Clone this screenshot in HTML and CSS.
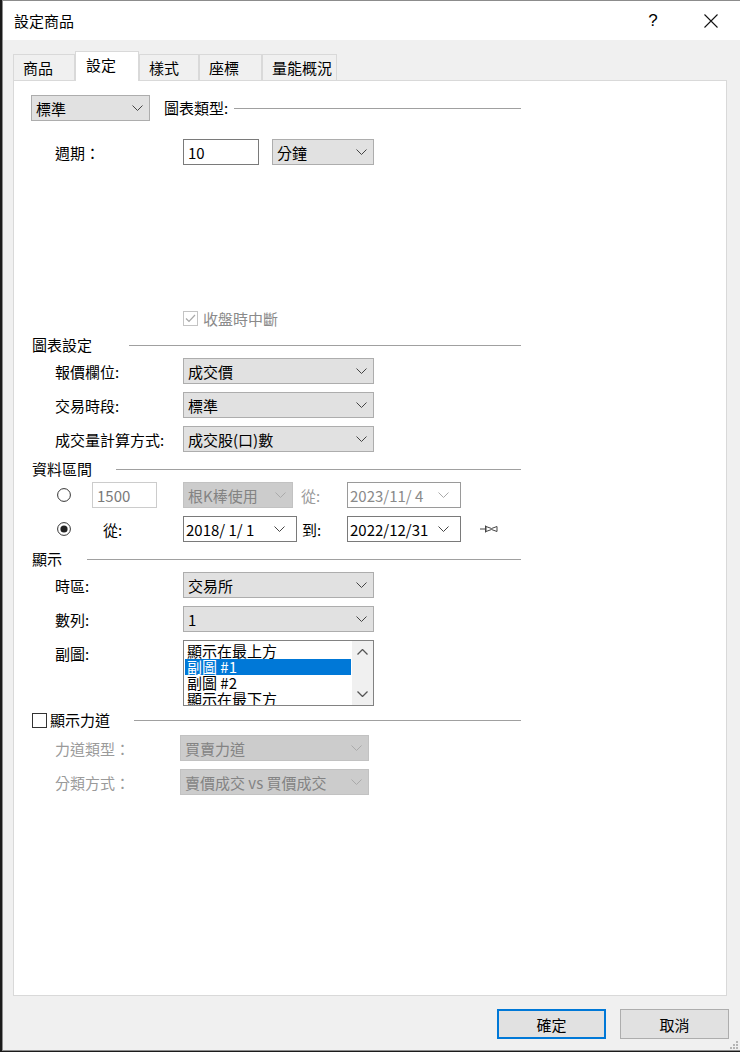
FILE: index.html
```html
<!DOCTYPE html>
<html lang="zh-Hant">
<head>
  <meta charset="UTF-8">
  <title>設定商品</title>
  <link rel="stylesheet" href="styles.css">
</head>
<body>
  <div class="window">
    <div class="titlebar">
      <span class="title">設定商品</span>
      <span class="help">?</span>
      <svg class="close" width="14" height="14" viewBox="0 0 14 14"><path d="M0.5 0.5L13.5 13.5M13.5 0.5L0.5 13.5" stroke="#111" stroke-width="1.1" fill="none"/></svg>
    </div>

    <div class="tabs">
      <div class="tab w62">商品</div>
      <div class="tab active">設定</div>
      <div class="tab w60">樣式</div>
      <div class="tab w63">座標</div>
      <div class="tab w75">量能概況</div>
    </div>

    <div class="panel">
      <!-- 圖表類型 -->
      <div class="row first">
        <div class="combo w119"><span>標準</span><svg class="chev" width="11" height="6" viewBox="0 0 11 6"><path d="M0.5 0.5L5.5 5.5L10.5 0.5"/></svg></div>
        <div class="sect-inline">
          <span class="sect-title">圖表類型:</span>
          <span class="sect-line"></span>
        </div>
      </div>

      <div class="row period">
        <span class="lbl">週期：</span>
        <div class="edit w76">10</div>
        <div class="combo w102 ml13"><span>分鐘</span><svg class="chev" width="11" height="6" viewBox="0 0 11 6"><path d="M0.5 0.5L5.5 5.5L10.5 0.5"/></svg></div>
      </div>

      <div class="check-row">
        <svg class="box" width="15" height="15" viewBox="0 0 15 15"><rect x="0.5" y="0.5" width="14" height="14" fill="#fff" stroke="#c4c4c4"/><path d="M3 7.5L6 10.5L12 4" stroke="#a8a8a8" stroke-width="1.2" fill="none"/></svg>
        <span class="dim">收盤時中斷</span>
      </div>

      <!-- 圖表設定 -->
      <div class="sect after-check">
        <span class="sect-title t91">圖表設定</span>
        <span class="sect-line"></span>
      </div>
      <div class="row">
        <span class="lbl">報價欄位:</span>
        <div class="combo w191"><span>成交價</span><svg class="chev" width="11" height="6" viewBox="0 0 11 6"><path d="M0.5 0.5L5.5 5.5L10.5 0.5"/></svg></div>
      </div>
      <div class="row">
        <span class="lbl">交易時段:</span>
        <div class="combo w191"><span>標準</span><svg class="chev" width="11" height="6" viewBox="0 0 11 6"><path d="M0.5 0.5L5.5 5.5L10.5 0.5"/></svg></div>
      </div>
      <div class="row">
        <span class="lbl">成交量計算方式:</span>
        <div class="combo w191"><span>成交股(口)數</span><svg class="chev" width="11" height="6" viewBox="0 0 11 6"><path d="M0.5 0.5L5.5 5.5L10.5 0.5"/></svg></div>
      </div>

      <!-- 資料區間 -->
      <div class="sect">
        <span class="sect-title t78">資料區間</span>
        <span class="sect-line"></span>
      </div>
      <div class="row radio-row">
        <svg class="radio" width="14" height="14" viewBox="0 0 14 14"><circle cx="7" cy="7" r="6.4" fill="#fff" stroke="#333"/></svg>
        <div class="edit disabled w65 ml21">1500</div>
        <div class="combo disabled w110 ml26"><span>根K棒使用</span><svg class="chev" width="11" height="6" viewBox="0 0 11 6"><path d="M0.5 0.5L5.5 5.5L10.5 0.5"/></svg></div>
        <span class="cell w54 dim-light">從:</span>
        <div class="date disabled"><span>2023/11/ 4</span><svg class="chev" width="11" height="6" viewBox="0 0 11 6"><path d="M0.5 0.5L5.5 5.5L10.5 0.5"/></svg></div>
      </div>
      <div class="row radio-row">
        <svg class="radio" width="14" height="14" viewBox="0 0 14 14"><circle cx="7" cy="7" r="6.4" fill="#fff" stroke="#333"/><circle cx="7" cy="7" r="3.6" fill="#222"/></svg>
        <span class="cell w112">從:</span>
        <div class="date"><span>2018/ 1/ 1</span><svg class="chev" width="11" height="6" viewBox="0 0 11 6"><path d="M0.5 0.5L5.5 5.5L10.5 0.5"/></svg></div>
        <span class="cell w50">到:</span>
        <div class="date"><span>2022/12/31</span><svg class="chev" width="11" height="6" viewBox="0 0 11 6"><path d="M0.5 0.5L5.5 5.5L10.5 0.5"/></svg></div>
        <svg class="pin" width="18" height="12" viewBox="0 0 18 12"><path d="M0 6H5M5.5 2.5V9.5M6 3.5L11.5 5.5L17 3.5V8.5L11.5 6.5L6 8.5Z" stroke="#444" stroke-width="1" fill="none"/></svg>
      </div>

      <!-- 顯示 -->
      <div class="sect">
        <span class="sect-title t49">顯示</span>
        <span class="sect-line"></span>
      </div>
      <div class="row">
        <span class="lbl">時區:</span>
        <div class="combo w191"><span>交易所</span><svg class="chev" width="11" height="6" viewBox="0 0 11 6"><path d="M0.5 0.5L5.5 5.5L10.5 0.5"/></svg></div>
      </div>
      <div class="row">
        <span class="lbl">數列:</span>
        <div class="combo w191"><span>1</span><svg class="chev" width="11" height="6" viewBox="0 0 11 6"><path d="M0.5 0.5L5.5 5.5L10.5 0.5"/></svg></div>
      </div>
      <div class="row list-row">
        <span class="lbl">副圖:</span>
        <div class="listbox">
          <div class="items">
            <div class="item">顯示在最上方</div>
            <div class="item sel">副圖 #1</div>
            <div class="item">副圖 #2</div>
            <div class="item">顯示在最下方</div>
          </div>
          <div class="vscroll">
            <svg width="11" height="6" viewBox="0 0 11 6"><path d="M0.5 5.5L5.5 0.5L10.5 5.5" stroke="#555" stroke-width="1.3" fill="none"/></svg>
            <svg width="11" height="6" viewBox="0 0 11 6"><path d="M0.5 0.5L5.5 5.5L10.5 0.5" stroke="#555" stroke-width="1.3" fill="none"/></svg>
          </div>
        </div>
      </div>

      <!-- 顯示力道 -->
      <div class="sect after-list">
        <svg class="box" width="15" height="15" viewBox="0 0 15 15"><rect x="0.5" y="0.5" width="14" height="14" fill="#fff" stroke="#333"/></svg>
        <span class="sect-title t78 tight">顯示力道</span>
        <span class="sect-line"></span>
      </div>
      <div class="row after-force">
        <span class="lbl narrow dim-light">力道類型：</span>
        <div class="combo disabled w189"><span>買賣力道</span><svg class="chev" width="11" height="6" viewBox="0 0 11 6"><path d="M0.5 0.5L5.5 5.5L10.5 0.5"/></svg></div>
      </div>
      <div class="row">
        <span class="lbl narrow dim-light">分類方式：</span>
        <div class="combo disabled w189"><span>賣價成交 vs 買價成交</span><svg class="chev" width="11" height="6" viewBox="0 0 11 6"><path d="M0.5 0.5L5.5 5.5L10.5 0.5"/></svg></div>
      </div>
    </div>

    <div class="buttons">
      <button class="btn default">確定</button>
      <button class="btn">取消</button>
    </div>

    <svg class="grip" width="9" height="9" viewBox="0 0 9 9"><g fill="#b5b5b5"><rect x="7" y="1" width="2" height="2"/><rect x="4" y="4" width="2" height="2"/><rect x="7" y="4" width="2" height="2"/><rect x="1" y="7" width="2" height="2"/><rect x="4" y="7" width="2" height="2"/><rect x="7" y="7" width="2" height="2"/></g></svg>
  </div>
</body>
</html>
```

FILE: styles.css
```css
* {
  box-sizing: border-box;
}

body {
  margin: 0;
  background: #1b1b1b;
  font-family: "Noto Sans CJK TC", "Liberation Sans", sans-serif;
  font-size: 15px;
  color: #000;
  overflow: hidden;
}

.window {
  position: relative;
  margin-left: 2px;
  width: 738px;
  height: 1051px;
  border: 1px solid #8c8c8c;
  border-right: none;
  background: #f0f0f0;
  display: flex;
  flex-direction: column;
}

/* title bar */
.titlebar {
  height: 39px;
  flex: none;
  background: #fff;
  display: flex;
  align-items: center;
  padding-left: 11px;
}

.title {
  line-height: 1;
}

.help {
  margin-left: auto;
  width: 20px;
  text-align: center;
  font-family: "Liberation Sans", sans-serif;
  font-size: 17px;
  line-height: 1;
}

.close {
  margin-left: 41px;
  margin-right: 22px;
}

/* tabs */
.tabs {
  display: flex;
  align-items: flex-end;
  height: 29px;
  margin-top: 11px;
  padding-left: 10px;
  flex: none;
}

.tab {
  height: 26px;
  border: 1px solid #d9d9d9;
  border-bottom: none;
  background: #f0f0f0;
  padding-left: 9px;
  line-height: 26px;
  white-space: nowrap;
}

.tab.w62 { width: 62px; }
.tab.w60 { width: 60px; }
.tab.w63 { width: 63px; }
.tab.w75 { width: 75px; }

.tab.active {
  width: 64px;
  height: 30px;
  margin-bottom: -1px;
  background: #fff;
  position: relative;
  z-index: 1;
  line-height: 26px;
  padding-left: 10px;
}

/* panel */
.panel {
  margin-left: 10px;
  width: 714px;
  height: 916px;
  flex: none;
  border: 1px solid #d9d9d9;
  background: #fff;
  padding: 14px 0 0 17px;
}

.row {
  display: flex;
  align-items: center;
  height: 26px;
  margin-top: 8px;
  white-space: nowrap;
}

.row.first { margin-top: 0; }
.row.period { margin-top: 18px; }
.sect + .row { margin-top: 4px; }
.sect + .row.after-force { margin-top: 6px; }

.lbl {
  width: 152px;
  padding-left: 24px;
  flex: none;
}

.lbl.narrow { width: 149px; }

.dim { color: #8a8a8a; }
.dim-light { color: #9a9a9a; }

/* controls */
.combo,
.date,
.edit {
  height: 26px;
  display: flex;
  align-items: center;
  justify-content: space-between;
  flex: none;
  line-height: 1;
}

.combo {
  background: #e1e1e1;
  border: 1px solid #adadad;
  padding: 0 6px 0 4px;
}

.combo.disabled {
  background: #cccccc;
  border-color: #c2c2c2;
  color: #838383;
}

.chev path {
  stroke: #444;
  stroke-width: 1;
  fill: none;
}

.disabled .chev path {
  stroke: #aaa;
}

.edit {
  background: #fff;
  border: 1px solid #7a7a7a;
  padding: 0 4px;
}

.edit.disabled {
  border-color: #cccccc;
  color: #7a7a7a;
}

.date {
  width: 114px;
  background: #fff;
  border: 1px solid #7a7a7a;
  padding: 0 11px 0 2px;
}

.date.disabled {
  border-color: #9a9a9a;
  color: #8a8a8a;
}

.w119 { width: 119px; }
.w76 { width: 76px; }
.w102 { width: 102px; }
.w191 { width: 191px; }
.w189 { width: 189px; }
.w65 { width: 65px; }
.w110 { width: 110px; }

.ml13 { margin-left: 13px; }
.ml21 { margin-left: 21px; }
.ml26 { margin-left: 26px; }

.cell { flex: none; }
.cell.w54 { width: 54px; padding-left: 8px; }
.cell.w112 { width: 112px; padding-left: 32px; }
.cell.w50 { width: 50px; padding-left: 5px; }

.radio-row { padding-left: 26px; }

.pin { margin-left: 19px; }

/* section headings */
.sect,
.sect-inline {
  display: flex;
  align-items: center;
  height: 18px;
  white-space: nowrap;
}

.sect {
  width: 490px;
  margin-top: 8px;
  padding-left: 1px;
}

.sect.after-check { margin-top: 10px; }
.sect.after-list { margin-top: 5px; }

.sect-inline {
  flex: none;
  width: 357px;
  margin-left: 14px;
}

.sect-title {
  line-height: 18px;
  margin-right: 6px;
  flex: none;
}

.sect-title.t91 { width: 91px; }
.sect-title.t78 { width: 78px; }
.sect-title.t49 { width: 49px; }
.sect-title.tight { width: 78px; margin-left: 3px; }

.sect-line {
  flex: 1;
  height: 1px;
  background: #a0a0a0;
  margin-top: 1px;
}

.check-row {
  display: flex;
  align-items: center;
  height: 16px;
  margin-top: 145px;
  padding-left: 152px;
  gap: 5px;
}

.box { flex: none; }

/* list box */
.row.list-row {
  height: 66px;
  align-items: flex-start;
}

.list-row .lbl {
  padding-top: 3px;
}

.listbox {
  width: 191px;
  height: 66px;
  border: 1px solid #828282;
  display: flex;
  flex: none;
}

.items {
  flex: 1;
  padding: 2px 1px 0 1px;
  overflow: hidden;
}

.item {
  height: 16px;
  line-height: 16px;
  padding-left: 2px;
}

.item.sel {
  background: #0078d7;
  color: #fff;
}

.vscroll {
  width: 21px;
  background: #f0f0f0;
  display: flex;
  flex-direction: column;
  align-items: center;
  justify-content: space-between;
  padding: 8px 0 8px;
}

/* dialog buttons */
.buttons {
  display: flex;
  justify-content: flex-end;
  gap: 14px;
  margin-top: 13px;
  padding-right: 11px;
}

.btn {
  width: 109px;
  height: 30px;
  background: #e1e1e1;
  border: 1px solid #adadad;
  font-family: inherit;
  font-size: 15px;
  color: #000;
  padding: 0;
}

.btn.default {
  border: 2px solid #0078d7;
}

.grip {
  position: absolute;
  right: 2px;
  bottom: 1px;
}
```
